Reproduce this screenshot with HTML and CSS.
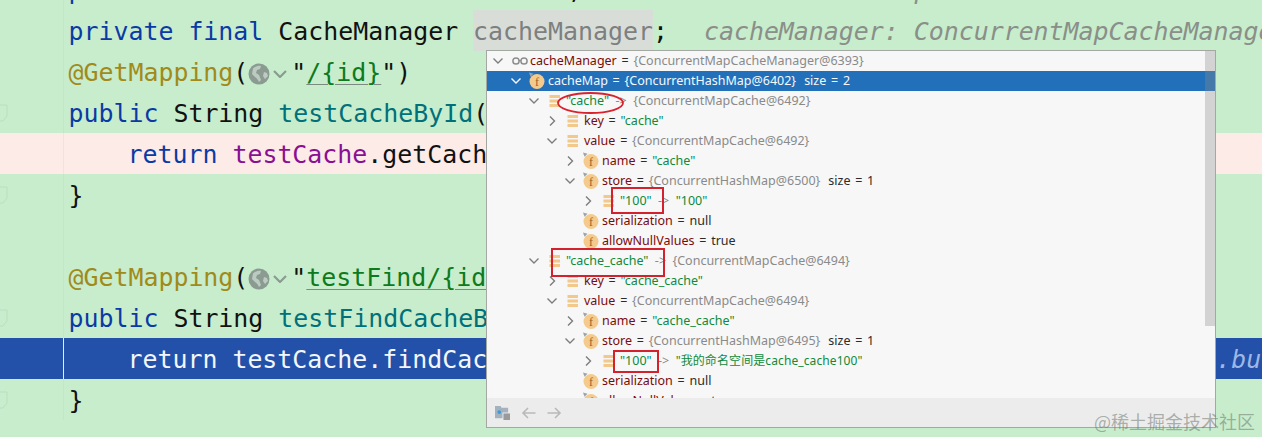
FILE: index.html
```html
<!DOCTYPE html>
<html lang="en">
<head>
<meta charset="utf-8">
<title>Debugger popup</title>
<link rel="stylesheet" href="styles.css">
</head>
<body>
<svg class="defs" width="0" height="0" aria-hidden="true">
  <symbol id="down" viewBox="0 0 18 20"><polyline points="4.5,7.5 9,12 13.5,7.5" fill="none" stroke="currentColor" stroke-width="1.4"/></symbol>
  <symbol id="right" viewBox="0 0 18 20"><polyline points="7,5.5 11.5,10 7,14.5" fill="none" stroke="currentColor" stroke-width="1.4"/></symbol>
  <symbol id="field" viewBox="0 0 20 20">
    <circle cx="10" cy="10.500" r="7.500" fill="#f4cb8c"/>
    <path d="M2 1.500l4.500 1.200-3 3z" fill="#9aa3ab"/>
    <text x="10" y="14.500" text-anchor="middle" font-family="Liberation Serif, serif" font-size="12" fill="#94642a">f</text>
  </symbol>
  <symbol id="list" viewBox="0 0 12 14">
    <rect x="0.5" y="1" width="10.500" height="3" fill="#f2c98a"/>
    <rect x="0.5" y="5.500" width="10.500" height="3" fill="#f2c98a"/>
    <rect x="0.5" y="10" width="10.500" height="3" fill="#f2c98a"/>
  </symbol>
  <symbol id="globe" viewBox="0 0 22 22">
    <circle cx="11" cy="11" r="10.500" fill="#8b9b92"/>
    <path d="M5 5.500c3-2.500 6-3 8-2.500l-1 3-3 1-1 3 3 2 2 5-2 2c-1-2-2-4-4-5l-3-3zM16 9l3 1 1 3-3 3-2-3z" fill="#bccbc1"/>
  </symbol>
  <symbol id="glasses" viewBox="0 0 16 10">
    <circle cx="4" cy="5" r="3.100" fill="none" stroke="#8e8e8e" stroke-width="1.500"/>
    <circle cx="12" cy="5" r="3.100" fill="none" stroke="#8e8e8e" stroke-width="1.500"/>
    <path d="M7 4.500h2" stroke="#8e8e8e" stroke-width="1"/>
  </symbol>
  <symbol id="fold" viewBox="0 0 8 18"><path d="M0 1h7v11l-4 5H0" fill="none" stroke="#bedcc3" stroke-width="1"/></symbol>
</svg>

<div class="screen">
  <div class="editor">
    <div class="line line-cut">
      <div class="gutter"></div>
      <div class="code"><span class="kw">p</span><span class="cut-comma">,</span><span class="cut-hint">p</span></div>
    </div>
    <div class="line">
      <div class="gutter"></div>
      <div class="code"><span class="kw">private final</span> CacheManager <span class="hl">cacheManager</span>;<span class="hint">cacheManager: ConcurrentMapCacheManager</span></div>
    </div>
    <div class="line">
      <div class="gutter"></div>
      <div class="code"><span class="anno">@GetMapping</span>(<span class="inlay"><svg class="globe"><use href="#globe"/></svg><svg class="inlay-arrow" viewBox="0 0 14 8"><polyline points="1,1 7,7 13,1" fill="none" stroke="#8b9b92" stroke-width="2.200"/></svg></span>"<span class="url">/{id}</span>")</div>
    </div>
    <div class="line">
      <div class="gutter"><svg class="fold"><use href="#fold"/></svg></div>
      <div class="code"><span class="kw">public</span> String <span class="fn">testCacheById</span>(</div>
    </div>
    <div class="line line-bp">
      <div class="gutter"></div>
      <div class="code code-in"><span class="kw">return</span> <span class="field">testCache</span>.getCach</div>
    </div>
    <div class="line">
      <div class="gutter"><svg class="fold"><use href="#fold"/></svg></div>
      <div class="code">}</div>
    </div>
    <div class="line">
      <div class="gutter"></div>
      <div class="code"></div>
    </div>
    <div class="line">
      <div class="gutter"></div>
      <div class="code"><span class="anno">@GetMapping</span>(<span class="inlay"><svg class="globe"><use href="#globe"/></svg><svg class="inlay-arrow" viewBox="0 0 14 8"><polyline points="1,1 7,7 13,1" fill="none" stroke="#8b9b92" stroke-width="2.200"/></svg></span>"<span class="url">testFind/{id</span></div>
    </div>
    <div class="line">
      <div class="gutter"><svg class="fold"><use href="#fold"/></svg></div>
      <div class="code"><span class="kw">public</span> String <span class="fn">testFindCacheB</span></div>
    </div>
    <div class="line line-exec">
      <div class="gutter"></div>
      <div class="code code-in">return testCache.findCac<span class="hint-exec">.bu</span></div>
    </div>
    <div class="line">
      <div class="gutter"><svg class="fold"><use href="#fold"/></svg></div>
      <div class="code">}</div>
    </div>
  </div>

  <div class="popup">
    <div class="tree">
      <div class="row l0"><svg class="chev"><use href="#down"/></svg><span class="ico"><svg class="glasses"><use href="#glasses"/></svg></span><span class="nm">cacheManager</span>&nbsp;= <span class="ref">{ConcurrentMapCacheManager@6393}</span></div>
      <div class="row l1 sel"><svg class="chev"><use href="#down"/></svg><span class="ico"><svg class="f"><use href="#field"/></svg></span><span class="nm">cacheMap</span>&nbsp;= <span class="ref">{ConcurrentHashMap@6402}</span><span class="size">size = 2</span></div>
      <div class="row l2"><svg class="chev"><use href="#down"/></svg><span class="ico"><svg class="lst"><use href="#list"/></svg></span><span class="str">"cache"</span><span class="ref arrow">-&gt;</span><span class="ref">{ConcurrentMapCache@6492}</span></div>
      <div class="row l3"><svg class="chev"><use href="#right"/></svg><span class="ico"><svg class="lst"><use href="#list"/></svg></span><span class="nm">key</span>&nbsp;= <span class="str">"cache"</span></div>
      <div class="row l3"><svg class="chev"><use href="#down"/></svg><span class="ico"><svg class="lst"><use href="#list"/></svg></span><span class="nm">value</span>&nbsp;= <span class="ref">{ConcurrentMapCache@6492}</span></div>
      <div class="row l4"><svg class="chev"><use href="#right"/></svg><span class="ico"><svg class="f"><use href="#field"/></svg></span><span class="nm">name</span>&nbsp;= <span class="str">"cache"</span></div>
      <div class="row l4"><svg class="chev"><use href="#down"/></svg><span class="ico"><svg class="f"><use href="#field"/></svg></span><span class="nm">store</span>&nbsp;= <span class="ref">{ConcurrentHashMap@6500}</span><span class="size">size = 1</span></div>
      <div class="row l5"><svg class="chev"><use href="#right"/></svg><span class="ico"><svg class="lst"><use href="#list"/></svg></span><span class="str">"100"</span><span class="ref arrow">-&gt;</span><span class="str">"100"</span></div>
      <div class="row l4"><span class="chev"></span><span class="ico"><svg class="f"><use href="#field"/></svg></span><span class="nm">serialization</span>&nbsp;= null</div>
      <div class="row l4"><span class="chev"></span><span class="ico"><svg class="f"><use href="#field"/></svg></span><span class="nm">allowNullValues</span>&nbsp;= true</div>
      <div class="row l2"><svg class="chev"><use href="#down"/></svg><span class="ico"><svg class="lst"><use href="#list"/></svg></span><span class="str">"cache_cache"</span><span class="ref arrow">-&gt;</span><span class="ref">{ConcurrentMapCache@6494}</span></div>
      <div class="row l3"><svg class="chev"><use href="#right"/></svg><span class="ico"><svg class="lst"><use href="#list"/></svg></span><span class="nm">key</span>&nbsp;= <span class="str">"cache_cache"</span></div>
      <div class="row l3"><svg class="chev"><use href="#down"/></svg><span class="ico"><svg class="lst"><use href="#list"/></svg></span><span class="nm">value</span>&nbsp;= <span class="ref">{ConcurrentMapCache@6494}</span></div>
      <div class="row l4"><svg class="chev"><use href="#right"/></svg><span class="ico"><svg class="f"><use href="#field"/></svg></span><span class="nm">name</span>&nbsp;= <span class="str">"cache_cache"</span></div>
      <div class="row l4"><svg class="chev"><use href="#down"/></svg><span class="ico"><svg class="f"><use href="#field"/></svg></span><span class="nm">store</span>&nbsp;= <span class="ref">{ConcurrentHashMap@6495}</span><span class="size">size = 1</span></div>
      <div class="row l5"><svg class="chev"><use href="#right"/></svg><span class="ico"><svg class="lst"><use href="#list"/></svg></span><span class="str">"100"</span><span class="ref arrow">-&gt;</span><span class="str cjk">"我的命名空间是cache_cache100"</span></div>
      <div class="row l4"><span class="chev"></span><span class="ico"><svg class="f"><use href="#field"/></svg></span><span class="nm">serialization</span>&nbsp;= null</div>
      <div class="row l4"><span class="chev"></span><span class="ico"><svg class="f"><use href="#field"/></svg></span><span class="nm">allowNullValues</span>&nbsp;= true</div>
      <div class="thumb"></div>
    </div>
    <div class="toolbar">
      <svg class="tool-tree" viewBox="0 0 16 16">
        <path d="M0 1h6l1 2h7v5H8v6H0z" fill="#a4b2bf"/>
        <circle cx="4.500" cy="7.500" r="2" fill="#3d9bd8"/>
        <rect x="9" y="9" width="7" height="7" fill="#9a9a9a"/>
      </svg>
      <svg class="tool-arrow" viewBox="0 0 14 12"><path d="M14 6H1.500M6.500 1L1.500 6l5 5" fill="none" stroke="#b9b9b9" stroke-width="1.600"/></svg>
      <svg class="tool-arrow" viewBox="0 0 14 12"><path d="M0 6h12.500M7.500 1l5 5-5 5" fill="none" stroke="#b9b9b9" stroke-width="1.600"/></svg>
    </div>
  </div>

  <svg class="marks" viewBox="0 0 1262 437" aria-hidden="true">
    <ellipse cx="590.500" cy="103" rx="32.500" ry="10" fill="none" stroke="#d8222e" stroke-width="1.800"/>
    <rect x="612" y="188" width="51" height="25" fill="none" stroke="#d3222e" stroke-width="2"/>
    <rect x="552" y="249" width="112" height="27" fill="none" stroke="#d3222e" stroke-width="2"/>
    <rect x="614" y="351" width="44" height="21" fill="none" stroke="#d3222e" stroke-width="2"/>
  </svg>

  <div class="watermark">@稀土掘金技术社区</div>
</div>
</body>
</html>
```

FILE: styles.css
```css
* { box-sizing: border-box; }
html, body { margin: 0; padding: 0; }
body { width: 1262px; height: 437px; overflow: hidden; background: #c7edcc; }
.defs { position: absolute; }

.screen { position: relative; width: 1262px; height: 437px; overflow: hidden; }

.editor {
  display: flex;
  flex-direction: column;
  margin-top: -31px;
  font-family: "DejaVu Sans Mono", "Liberation Mono", monospace;
  font-size: 24.9px;
  color: #111;
}
.line { display: flex; height: 41px; line-height: 43px; white-space: pre; }
.gutter { flex: 0 0 64px; display: flex; align-items: center; border-right: 1px solid #c2e6c7; }
.code { flex: 1; padding-left: 4.500px; }
.code-in { padding-left: 63.500px; }
.line-bp { background: #fdebe8; }
.line-bp .gutter { border-right-color: #f6e0dc; }
.line-exec { background: #2350a8; color: #f3f6fb; }
.line-exec .gutter { border-right-color: #e4ecf6; }
.fold { width: 8px; height: 18px; }

.kw { color: #0b3aa6; }
.anno { color: #a08a1a; }
.fn { color: #00707a; }
.field { color: #8a0f93; }
.url {
  color: #0d7a20;
  text-decoration: underline;
  text-decoration-color: #7d8a80;
  text-decoration-thickness: 1px;
  text-underline-offset: 3px;
}
.hl { display: inline-block; background: #d8ddd8; color: #7d7f80; height: 41px; }
.hint { margin-left: 36px; color: #8a8f8a; font-style: italic; }
.hint-exec { margin-left: 729px; color: #9db8e6; font-style: italic; }
.cut-comma { margin-left: 484px; }
.cut-hint { margin-left: 332px; color: #8a8f8a; font-style: italic; }

.inlay { display: inline-flex; align-items: center; width: 43px; height: 22px; vertical-align: -4px; }
.globe { flex: 0 0 22px; width: 22px; height: 22px; }
.inlay-arrow { flex: 0 0 14px; width: 14px; height: 8px; margin-left: 3px; }

.popup {
  position: absolute;
  left: 486px;
  top: 50px;
  width: 730px;
  height: 378px;
  display: flex;
  flex-direction: column;
  background: #f7f7f7;
  border: 1px solid #a3a8a3;
  font-family: "Noto Sans", "Noto Sans CJK SC", sans-serif;
  font-size: 12.5px;
  color: #2b2b2b;
}
.tree { position: relative; flex: 1; overflow: hidden; }
.row {
  display: flex;
  align-items: flex-start;
  height: 20px;
  line-height: 19px;
  white-space: pre;
  word-spacing: 1.500px;
}
.l0 { padding-left: 2px; }
.l1 { padding-left: 20px; }
.l2 { padding-left: 38px; }
.l3 { padding-left: 56px; }
.l4 { padding-left: 74px; }
.l5 { padding-left: 92px; }
.chev { flex: 0 0 18px; width: 18px; height: 20px; color: #7d7d7d; }
.ico { flex: 0 0 23px; display: flex; align-items: center; height: 20px; }
.f { width: 20px; height: 20px; margin-left: 2px; }
.lst { width: 12px; height: 14px; margin-left: 6px; }
.glasses { width: 16px; height: 10px; margin-left: 5px; }
.nm { color: #7a0a0a; }
.str { color: #0f8a3a; }
.cjk { font-size: 12px; letter-spacing: .1px; }
.ref { color: #8a8a8a; }
.arrow { flex: 0 0 24px; text-align: center; }
.size { margin-left: 8px; }
.sel { background: #2370ba; color: #f5f8fc; }
.sel .nm, .sel .ref { color: #f5f8fc; }
.sel .chev { color: #f5f8fc; }
.thumb {
  position: absolute;
  right: 0;
  top: 0;
  width: 10px;
  height: 275px;
  background: rgba(140, 140, 140, .33);
}

.toolbar {
  flex: 0 0 29px;
  display: flex;
  align-items: center;
  gap: 11px;
  padding-left: 8px;
  background: #ececec;
}
.tool-tree { width: 15px; height: 15px; }
.tool-arrow { width: 15px; height: 12px; }

.marks { position: absolute; left: 0; top: 0; width: 1262px; height: 437px; pointer-events: none; }

.watermark {
  position: absolute;
  right: 7px;
  top: 409px;
  font-family: "Noto Sans CJK SC", sans-serif;
  font-size: 18px;
  line-height: 24px;
  color: rgba(110, 120, 112, .55);
}
```
